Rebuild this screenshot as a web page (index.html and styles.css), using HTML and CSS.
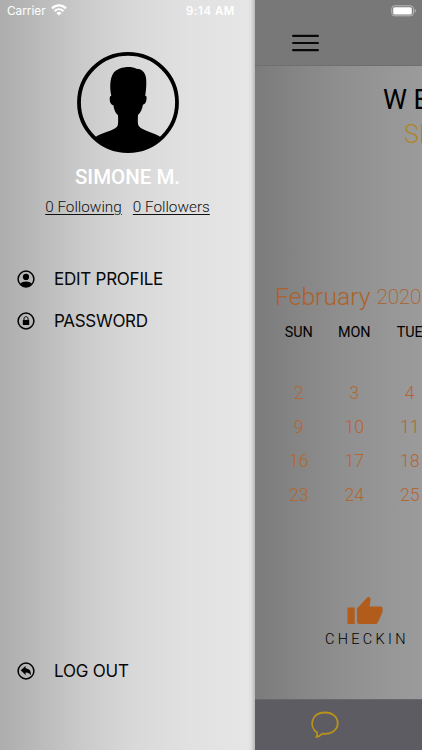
FILE: index.html
```html
<!DOCTYPE html>
<html lang="en">
<head>
<meta charset="utf-8">
<title>Profile menu</title>
<link rel="stylesheet" href="styles.css">
</head>
<body>
<div class="app">
  <aside class="drawer">
    <div class="status">
      <span class="carrier">Carrier</span>
      <svg class="wifi" width="16" height="12" viewBox="0 0 16 12"><g fill="none" stroke="#fff" stroke-width="2.200"><path d="M1 4.400C5 .4 11 .4 15 4.400"/><path d="M3.500 7.100c2.600-2.500 6.400-2.500 9 0"/></g><path d="M5.400 8.900c1.600-1.400 3.600-1.400 5.200 0L8 11.600z" fill="#fff"/></svg>
      <span class="time">9:14 AM</span>
    </div>
    <svg class="avatar" width="102" height="101" viewBox="0 0 102 102" preserveAspectRatio="none">
      <circle cx="51" cy="51" r="49" fill="none" stroke="#000" stroke-width="3.800"/>
      <path d="M17.500 86.500C25 81 36 80 40 75.500c1.500-1.700 1.200-6 1-11.500-3-3-4-6.500-4.600-10.300-2.600-.3-3.700-3-3.700-6.700 0-1.500.6-2.700 1.600-2.700-1.600-8-1.600-17 2-22.800 4.700-7 18.200-8 23.200-4.500 6 0 9.200 4.500 9.700 10.500.4 6-.2 12-1 16.800 1 0 1.500.8 1.400 2.200-.2 4-1.300 6.400-3.700 6.700-.6 4-1.900 7.500-4.900 10.500-.2 5-.5 9.600 1 11.300C66 80 77 81 84.500 86.500 74 96.500 63 101 51 101S28 96.500 17.500 86.500z"/>
    </svg>
    <h1 class="name">SIMONE M.</h1>
    <div class="follows"><a class="following">0 Following</a><a class="followers">0 Followers</a></div>
    <nav class="menu">
      <a class="item"><svg width="18" height="18" viewBox="0 0 18 18"><circle cx="9" cy="9" r="7.900" fill="none" stroke="#000" stroke-width="1.500"/><circle cx="9" cy="6.900" r="3.100"/><path d="M3.200 13.700c2.500-2.800 9.100-2.800 11.600 0C11.800 17.600 6.200 17.600 3.200 13.700z"/></svg><span class="edit">EDIT PROFILE</span></a>
      <a class="item"><svg width="18" height="18" viewBox="0 0 18 18"><circle cx="9" cy="9" r="7.900" fill="none" stroke="#000" stroke-width="1.500"/><rect x="5.800" y="8" width="6.400" height="5" rx=".5"/><path d="M7 8.500V6.700c0-2.700 4-2.700 4 0v1.800" fill="none" stroke="#000" stroke-width="1"/></svg><span class="pass">PASSWORD</span></a>
      <a class="item logout"><svg width="18" height="18" viewBox="0 0 18 18"><circle cx="9" cy="9" r="7.900" fill="none" stroke="#000" stroke-width="1.500"/><path d="M3.700 8.300 8.600 4v2.500c3.600.1 5.600 2 5.200 6.700-1.200-2-2.600-2.800-5.200-2.700v2.400z"/></svg><span class="out">LOG OUT</span></a>
    </nav>
  </aside>
  <main class="page">
    <header class="topbar">
      <svg class="battery" width="26" height="12" viewBox="0 0 26 12"><rect x=".8" y=".8" width="21.600" height="10" rx="2.800" fill="none" stroke="#bbb"/><rect x="2.200" y="2.200" width="18.600" height="7.200" rx="1.500" fill="#fff"/><path d="M23.700 4v3.700c1.600-.7 1.600-3 0-3.700z" fill="#bbb"/></svg>
      <svg class="burger" width="27" height="18" viewBox="0 0 27 18" stroke="#080808" stroke-width="2.200" stroke-linecap="round"><path d="M1.100 1.900h24.800M1.100 9h24.800M1.100 16.200h24.800"/></svg>
    </header>
    <section class="content">
      <h2 class="welcome">WELCOME</h2>
      <p class="user">SIMONE</p>
      <div class="month"><span class="mname">February</span><span class="year">2020</span></div>
      <div class="days"><span>SUN</span><span>MON</span><span>TUE</span></div>
      <div class="dates">
        <span>2</span><span>3</span><span>4</span>
        <span>9</span><span>10</span><span>11</span>
        <span>16</span><span>17</span><span>18</span>
        <span>23</span><span>24</span><span>25</span>
      </div>
      <div class="checkin">
        <svg width="36" height="29" viewBox="0 0 36 29" fill="#b15c1a"><path d="M.5 11.500h7.200V28H.5zM10 12.500 20.700 1c.7-.7 2.900.9 2.900 2.600L22.500 10.500h11c1.500 0 2.100.8 2.100 2.200v3.100l-4.500 10.100c-.6 1.300-1.500 2.100-3 2.100H12.500C10.800 28 10 27.100 10 25.500z"/></svg>
        <span>CHECKIN</span>
      </div>
    </section>
    <footer class="tabs"><svg width="28" height="28" viewBox="0 0 28 28"><path d="M5.800 21.300C-2 16-.3 1.500 14 1.500c8 0 12.700 4.800 12.700 10.700 0 7-6.700 11.400-15.200 10.500-1.900 1.900-3.700 3.100-6.300 3.500 1.100-1.500 1.500-2.900.6-4.900z" fill="none" stroke="#b8921a" stroke-width="1.800" stroke-linejoin="round"/></svg></footer>
  </main>
</div>
</body>
</html>
```
FILE: styles.css
```css
* { box-sizing: border-box; }
body { margin: 0; font-family: Roboto, sans-serif; color: #111; overflow: hidden; }
h1, h2, p { margin: 0; font-weight: 400; }
svg { display: block; flex: none; }
span, a, h1, h2, p { white-space: nowrap; }
.app { display: flex; width: 422px; height: 750px; overflow: hidden; }

.drawer {
  width: 255px; height: 750px; flex: none; display: flex; flex-direction: column; align-items: center;
  background:
    linear-gradient(90deg, transparent 248px, rgba(0,0,0,.03) 251px, rgba(0,0,0,.2) 255px),
    linear-gradient(90deg, #adadad 0, #bababa 15%, #cbcbcb 33%, #d8d8d8 52%, #e1e1e1 74%, #e6e6e6 100%);
}
.status { width: 255px; height: 22px; display: flex; align-items: center; padding-left: 7px; color: #fff; font-family: Inter, sans-serif; font-size: 11.800px; line-height: 22px; }
.carrier { width: 39px; }
.wifi { margin-left: 5px; margin-top: -2px; }
.time { margin-left: 119px; font-size: 11.500px; font-weight: 600; letter-spacing: .5px; }
.avatar { margin-top: 30px; }
.name { margin-top: 12px; height: 25px; line-height: 25px; font-size: 20.500px; font-weight: 500; color: #fff; }
.follows { display: flex; gap: 11px; margin-top: 7px; height: 20px; line-height: 20px; font-size: 15.300px; font-weight: 300; }
.follows a { text-decoration: underline; text-underline-offset: 2px; text-decoration-thickness: 1px; }
.menu { width: 255px; flex: 1; padding: 41px 0 58px 17px; display: flex; flex-direction: column; }
.item { height: 42px; display: flex; align-items: center; gap: 19px; font-family: Inter, sans-serif; font-size: 17px; color: #080808; }
.edit { letter-spacing: -.25px; }
.pass { letter-spacing: -.3px; }
.out { letter-spacing: -.2px; }
.logout { margin-top: auto; }

.page { width: 167px; flex: none; display: flex; flex-direction: column; overflow: hidden; }
.topbar { height: 66px; background: #787878; border-bottom: 1px solid #6e6e6e; }
.battery { margin: 0 0 0 136px; transform: translateY(5px); }
.burger { margin: 22px 0 0 37px; }
.content { height: 633px; padding-top: 20px; background: linear-gradient(90deg, #7b7b7b 0, #858585 25%, #8f8f8f 52%, #969696 78%, #9b9b9b 100%); }
.welcome { margin-left: 128px; height: 30px; line-height: 29px; font-size: 27px; letter-spacing: 6.500px; color: #000; }
.user { margin: 4px 0 0 149px; height: 30px; line-height: 30px; font-size: 25px; font-weight: 300; color: #b08428; }
.month { margin: 131px 0 0 20px; height: 32px; display: flex; align-items: baseline; gap: 6px; line-height: 32px; color: #ae6128; }
.mname { font-size: 24.700px; font-weight: 300; }
.year { font-size: 20.500px; font-weight: 200; letter-spacing: -.1px; transform: translateY(-1px); }
.days, .dates { width: 167px; margin-left: 16px; display: grid; grid-template-columns: repeat(3, 55.500px); text-align: center; }
.days { margin-top: 10px; height: 20px; line-height: 20px; font-size: 14.400px; color: #000; }
.dates { margin-top: 33px; grid-auto-rows: 34px; line-height: 34px; font-size: 17.700px; font-weight: 300; color: #b46630; }
.checkin { margin: 84px 0 0 70px; display: flex; flex-direction: column; align-items: flex-start; }
.checkin svg { margin-left: 22px; }
.checkin span { margin-top: 5px; line-height: 20px; font-size: 14.500px; font-weight: 300; letter-spacing: 3.300px; color: #000; }
.tabs { height: 51px; background: #5d5c63; border-top: 1px solid #68676e; padding: 11px 0 0 56px; }
```
